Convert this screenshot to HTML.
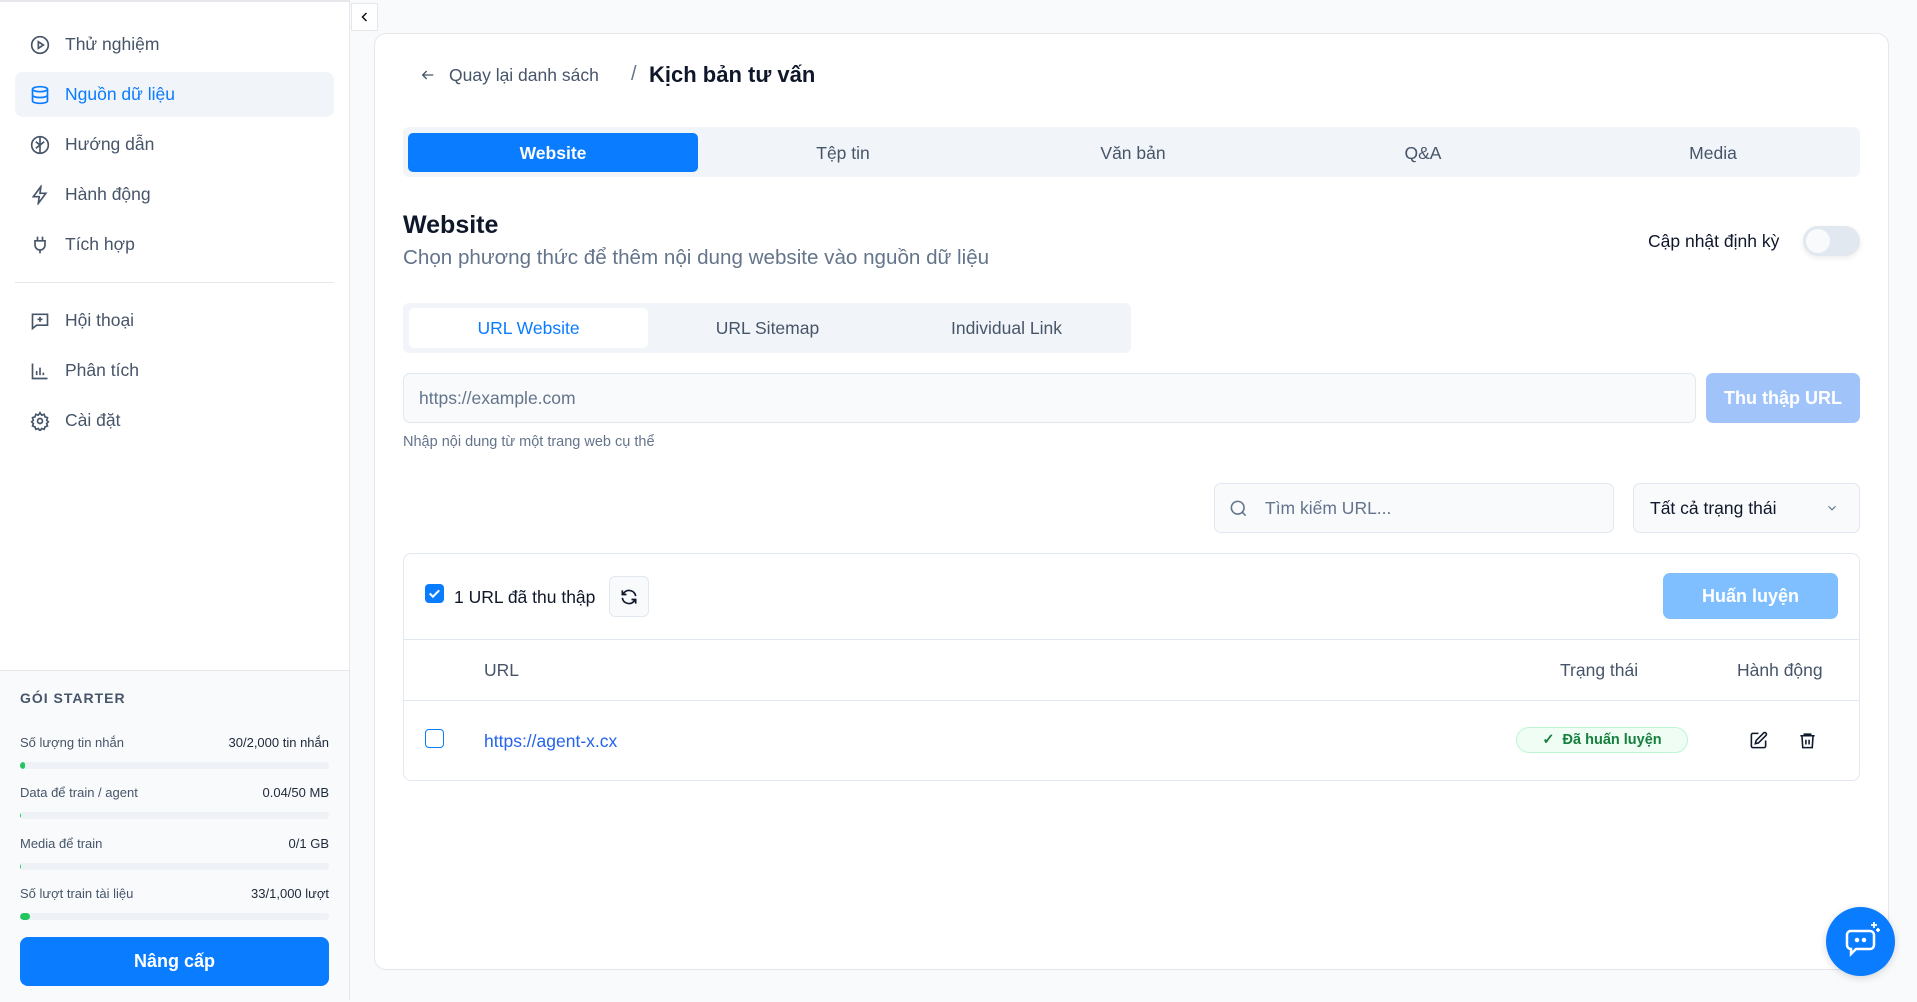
<!DOCTYPE html>
<html><head><meta charset="utf-8"><style>
*{box-sizing:border-box;margin:0;padding:0}
body{width:1917px;height:1000px;overflow:hidden;background:#f8fafc;font-family:"Liberation Sans",sans-serif;position:relative;color:#0f172a}
.abs{position:absolute}
.sb{left:0;top:0;width:350px;height:1000px;background:#fff;border-right:1px solid #e5e7eb;border-top:2px solid #e5e7eb}
.item{position:absolute;left:15px;width:319px;height:45px;display:flex;align-items:center;font-size:17.5px;color:#475569;border-radius:8px}
.item svg{position:absolute;left:15px;width:20px;height:20px}
.item span{position:absolute;left:50px}
.item.act{background:#f1f5f9;color:#0a7cff}
.bot{left:0;top:668px;width:349px;height:332px;background:#f8fafc;border-top:1px solid #e5e7eb}
.row{position:absolute;left:20px;width:309px;font-size:13px;color:#475569;display:flex;justify-content:space-between}
.row b{font-weight:normal;color:#1e293b}
.bar{position:absolute;left:20px;width:309px;height:7px;border-radius:4px;background:#eef1f5;overflow:hidden}
.bar i{display:block;height:7px;background:#22c55e;border-radius:4px}
.card{left:374px;top:33px;width:1515px;height:937px;background:#fff;border:1px solid #e5e7eb;border-radius:12px}
.tab{position:absolute;top:0;height:40px;display:flex;align-items:center;justify-content:center;font-size:17.5px;color:#475569}
</style></head><body>
<div class="abs sb">
 <div class="item" style="top:20px"><svg viewBox="0 0 24 24" fill="none" stroke="#475569" stroke-width="2"><circle cx="12" cy="12" r="10"/><path d="M10 8l6 4-6 4z"/></svg><span>Thử nghiệm</span></div>
 <div class="item act" style="top:70px"><svg viewBox="0 0 24 24" fill="none" stroke="#0a7cff" stroke-width="2"><ellipse cx="12" cy="5" rx="9" ry="3"/><path d="M3 5v14c0 1.7 4 3 9 3s9-1.3 9-3V5M3 12c0 1.7 4 3 9 3s9-1.3 9-3"/></svg><span>Nguồn dữ liệu</span></div>
 <div class="item" style="top:120px"><svg viewBox="0 0 24 24" fill="none" stroke="#475569" stroke-width="2"><circle cx="12" cy="12" r="10"/><path d="M12 2v20M7 8l5 4 5-4M7 16l5-4"/></svg><span>Hướng dẫn</span></div>
 <div class="item" style="top:170px"><svg viewBox="0 0 24 24" fill="none" stroke="#475569" stroke-width="2"><path d="M13 2L4 14h7l-1 8 9-12h-7z"/></svg><span>Hành động</span></div>
 <div class="item" style="top:220px"><svg viewBox="0 0 24 24" fill="none" stroke="#475569" stroke-width="2"><path d="M9 2v5M15 2v5M6 7h12v5a6 6 0 0 1-12 0zM12 18v4"/></svg><span>Tích hợp</span></div>
 <div class="abs" style="left:15px;top:280px;width:319px;height:1px;background:#e5e7eb"></div>
 <div class="item" style="top:296px"><svg viewBox="0 0 24 24" fill="none" stroke="#475569" stroke-width="2"><path d="M3 4h18v13H8l-5 4zM12 7v6M9 10h6"/></svg><span>Hội thoại</span></div>
 <div class="item" style="top:346px"><svg viewBox="0 0 24 24" fill="none" stroke="#475569" stroke-width="2"><path d="M3 3v18h18M8 17v-5M12 17V8M16 17v-3"/></svg><span>Phân tích</span></div>
 <div class="item" style="top:396px"><svg viewBox="0 0 24 24" fill="none" stroke="#475569" stroke-width="2"><circle cx="12" cy="12" r="3"/><path d="M12 2l2 3 3-1 1 3 3 1-1 3 2 2-2 2 1 3-3 1-1 3-3-1-2 3-2-3-3 1-1-3-3-1 1-3-2-2 2-2-1-3 3-1 1-3 3 1z"/></svg><span>Cài đặt</span></div>
 <div class="abs bot">
  <div class="abs" style="left:20px;top:19px;font-size:14px;font-weight:bold;color:#475569;letter-spacing:1px">GÓI STARTER</div>
  <div class="row" style="top:64px"><span>Số lượng tin nhắn</span><b>30/2,000 tin nhắn</b></div>
  <div class="bar" style="top:91px"><i style="width:5px"></i></div>
  <div class="row" style="top:114px"><span>Data để train / agent</span><b>0.04/50 MB</b></div>
  <div class="bar" style="top:141px"><i style="width:1px"></i></div>
  <div class="row" style="top:165px"><span>Media để train</span><b>0/1 GB</b></div>
  <div class="bar" style="top:192px"><i style="width:1px"></i></div>
  <div class="row" style="top:215px"><span>Số lượt train tài liệu</span><b>33/1,000 lượt</b></div>
  <div class="bar" style="top:242px"><i style="width:10px"></i></div>
  <div class="abs" style="left:20px;top:266px;width:309px;height:49px;background:#0a7cff;border-radius:8px;color:#fff;font-size:18px;font-weight:bold;display:flex;align-items:center;justify-content:center">Nâng cấp</div>
 </div>
</div>
<div class="abs" style="left:351px;top:3px;width:27px;height:28px;background:#fff;border:1px solid #e5e7eb;display:flex;align-items:center;justify-content:center"><svg width="12" height="12" viewBox="0 0 24 24" fill="none" stroke="#111" stroke-width="3"><path d="M15 4l-8 8 8 8"/></svg></div>
<div class="abs card"></div>
<svg class="abs" style="left:420px;top:67px" width="16" height="16" viewBox="0 0 24 24" fill="none" stroke="#475569" stroke-width="2"><path d="M20 12H4M10 6l-6 6 6 6"/></svg>
<div class="abs" style="left:449px;top:65px;font-size:17.5px;color:#475569">Quay lại danh sách</div>
<div class="abs" style="left:631px;top:63px;font-size:20px;color:#64748b">/</div>
<div class="abs" style="left:649px;top:62px;font-size:22px;font-weight:bold;color:#0f172a">Kịch bản tư vấn</div>
<div class="abs" style="left:403px;top:127px;width:1457px;height:50px;background:#f1f5f9;border-radius:6px">
 <div class="abs" style="left:5px;top:6px;width:290px;height:39px;background:#0a7cff;border-radius:5px"></div>
 <div class="tab" style="left:5px;width:290px;top:6px;color:#fff;font-weight:bold">Website</div>
 <div class="tab" style="left:295px;width:290px;top:6px">Tệp tin</div>
 <div class="tab" style="left:585px;width:290px;top:6px">Văn bản</div>
 <div class="tab" style="left:875px;width:290px;top:6px">Q&amp;A</div>
 <div class="tab" style="left:1165px;width:290px;top:6px">Media</div>
</div>
<div class="abs" style="left:403px;top:211px;font-size:25px;font-weight:bold;color:#0f172a">Website</div>
<div class="abs" style="left:403px;top:246px;font-size:20.6px;color:#64748b">Chọn phương thức để thêm nội dung website vào nguồn dữ liệu</div>
<div class="abs" style="left:1648px;top:231px;font-size:17.5px;color:#0f172a">Cập nhật định kỳ</div>
<div class="abs" style="left:1803px;top:226px;width:57px;height:30px;background:#e2e8f0;border-radius:15px;box-shadow:0 2px 6px rgba(0,0,0,.08)"><div class="abs" style="left:3px;top:3px;width:24px;height:24px;border-radius:12px;background:#f8fafc"></div></div>
<div class="abs" style="left:403px;top:303px;width:728px;height:50px;background:#f1f5f9;border-radius:6px">
 <div class="abs" style="left:6px;top:5px;width:239px;height:40px;background:#fff;border-radius:5px"></div>
 <div class="tab" style="left:6px;width:239px;top:5px;color:#0a7cff">URL Website</div>
 <div class="tab" style="left:245px;width:239px;top:5px">URL Sitemap</div>
 <div class="tab" style="left:484px;width:239px;top:5px">Individual Link</div>
</div>
<div class="abs" style="left:403px;top:373px;width:1293px;height:50px;background:#f8fafc;border:1px solid #e2e8f0;border-radius:7px;font-size:17.5px;color:#64748b;padding:14px 15px">https://example.com</div>
<div class="abs" style="left:1706px;top:373px;width:154px;height:50px;background:#a0c4fa;border-radius:7px;color:#fff;font-size:18px;font-weight:bold;display:flex;align-items:center;justify-content:center">Thu thập URL</div>
<div class="abs" style="left:403px;top:434px;font-size:14.5px;color:#64748b">Nhập nội dung từ một trang web cụ thể</div>
<div class="abs" style="left:1214px;top:483px;width:400px;height:50px;background:#f8fafc;border:1px solid #e2e8f0;border-radius:7px"></div>
<svg class="abs" style="left:1229px;top:499px" width="19" height="19" viewBox="0 0 24 24" fill="none" stroke="#64748b" stroke-width="2"><circle cx="11" cy="11" r="8"/><path d="M21 21l-4.3-4.3"/></svg>
<div class="abs" style="left:1265px;top:498px;font-size:17.5px;color:#64748b">Tìm kiếm URL...</div>
<div class="abs" style="left:1633px;top:483px;width:227px;height:50px;background:#f8fafc;border:1px solid #e2e8f0;border-radius:7px"></div>
<div class="abs" style="left:1650px;top:498px;font-size:17.5px;color:#0f172a">Tất cả trạng thái</div>
<svg class="abs" style="left:1825px;top:501px" width="14" height="14" viewBox="0 0 24 24" fill="none" stroke="#64748b" stroke-width="2"><path d="M6 9l6 6 6-6"/></svg>
<div class="abs" style="left:403px;top:553px;width:1457px;height:228px;border:1px solid #e2e8f0;border-radius:8px"></div>
<div class="abs" style="left:403px;top:639px;width:1457px;height:1px;background:#e2e8f0"></div>
<div class="abs" style="left:403px;top:700px;width:1457px;height:1px;background:#e2e8f0"></div>
<div class="abs" style="left:425px;top:584px;width:19px;height:19px;background:#0a7cff;border-radius:4px"><svg width="19" height="19" viewBox="0 0 24 24" fill="none" stroke="#fff" stroke-width="2.5"><path d="M6 12l4 4 8-8"/></svg></div>
<div class="abs" style="left:454px;top:587px;font-size:17.5px;color:#0f172a">1 URL đã thu thập</div>
<div class="abs" style="left:609px;top:576px;width:40px;height:41px;background:#f8fafc;border:1px solid #e2e8f0;border-radius:6px;display:flex;align-items:center;justify-content:center"><svg width="20" height="20" viewBox="0 0 24 24" fill="none" stroke="#0f172a" stroke-width="2"><path d="M20 11a8 8 0 0 0-14-4l-2 2M4 4v5h5M4 13a8 8 0 0 0 14 4l2-2M20 20v-5h-5"/></svg></div>
<div class="abs" style="left:1663px;top:573px;width:175px;height:46px;background:#80bfff;border-radius:7px;color:#fff;font-size:18px;font-weight:bold;display:flex;align-items:center;justify-content:center">Huấn luyện</div>
<div class="abs" style="left:484px;top:660px;font-size:17.5px;color:#475569">URL</div>
<div class="abs" style="left:1560px;top:660px;font-size:17.5px;color:#475569">Trạng thái</div>
<div class="abs" style="left:1737px;top:660px;font-size:17.5px;color:#475569">Hành động</div>
<div class="abs" style="left:425px;top:729px;width:19px;height:19px;border:1.5px solid #0a7cff;border-radius:4px"></div>
<div class="abs" style="left:484px;top:731px;font-size:17.5px;color:#2563eb">https://agent-x.cx</div>
<div class="abs" style="left:1516px;top:727px;width:172px;height:26px;background:#effdf4;border:1px solid #bbf7d0;border-radius:13px;font-size:14.5px;font-weight:bold;color:#15803d;display:flex;align-items:center;justify-content:center">✓&nbsp; Đã huấn luyện</div>
<svg class="abs" style="left:1749px;top:731px" width="19" height="19" viewBox="0 0 24 24" fill="none" stroke="#0f172a" stroke-width="2"><path d="M12 3H5a2 2 0 0 0-2 2v14a2 2 0 0 0 2 2h14a2 2 0 0 0 2-2v-7"/><path d="M18.4 2.6a2 2 0 0 1 3 3L12 15l-4 1 1-4z"/></svg>
<svg class="abs" style="left:1798px;top:731px" width="19" height="19" viewBox="0 0 24 24" fill="none" stroke="#0f172a" stroke-width="2"><path d="M3 6h18M8 6V4h8v2M5 6l1 15h12l1-15M10 11v6M14 11v6"/></svg>
<div class="abs" style="left:1826px;top:907px;width:69px;height:69px;border-radius:50%;background:#0a7cff;box-shadow:0 2px 8px rgba(0,0,0,.15)"><svg style="position:absolute;left:14px;top:12px" width="42" height="42" viewBox="0 0 42 42" fill="none" stroke="#fff" stroke-width="2.5"><path d="M10 12h20a4 4 0 0 1 4 4v10a4 4 0 0 1-4 4H16l-5 5v-5a4 4 0 0 1-4-4V16a4 4 0 0 1 3-4z"/><circle cx="17" cy="21" r="1" fill="#fff"/><circle cx="24" cy="21" r="1" fill="#fff"/><path d="M34 3v6M31 6h6M38 9v4M36 11h4" stroke-width="1.8"/></svg></div>
</body></html>
